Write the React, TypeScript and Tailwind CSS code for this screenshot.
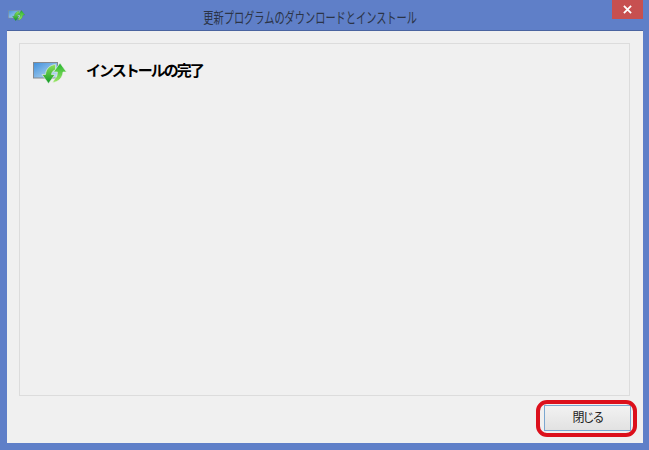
const UpdateIcon = ({ className, id, outline }: { className: string; id: string; outline: string }) => (
  <svg viewBox="0 0 34 22" className={className}>
    <defs>
      <linearGradient id={`${id}-screen`} x1="0" y1="0" x2="1" y2="1">
        <stop offset="0" stopColor="#3f8fdc" />
        <stop offset="1" stopColor="#c4e0f2" />
      </linearGradient>
      <linearGradient id={`${id}-left`} x1="0" y1="0" x2="0" y2="1">
        <stop offset="0" stopColor="#8ee05a" />
        <stop offset="1" stopColor="#0f9a25" />
      </linearGradient>
      <linearGradient id={`${id}-right`} x1="0" y1="0" x2="0" y2="1">
        <stop offset="0" stopColor="#25b530" />
        <stop offset="1" stopColor="#9ce666" />
      </linearGradient>
    </defs>
    <rect x="0.5" y="0.5" width="24" height="15.5" fill={`url(#${id}-screen)`} stroke="#85898e" />
    <g transform="translate(1.5 0)">
      <path d="M21 2.5 C15 3 11.5 7 11 12.5 L7.5 12.5 L14 21.5 L20.5 12.5 L17 12.5 C17.5 10 18.5 8.5 21 8 Z" fill={`url(#${id}-left)`} stroke={outline} strokeWidth="0.6" />
      <path d="M25.5 1 L32 10 L28.5 10 C28 16 24 20 18 20.5 L20.5 16.5 C22 15.5 23 13 23 10 L19 10 Z" fill={`url(#${id}-right)`} stroke={outline} strokeWidth="0.6" />
    </g>
  </svg>
);

export default function App() {
  return (
    <div className="relative w-[649px] h-[450px] overflow-hidden bg-[#5f7fc8] font-['Liberation_Sans','Noto_Sans_CJK_JP',sans-serif] flex flex-col">
      {/* title bar */}
      <div className="h-[30px] flex items-start pl-[8px] pr-[6px] shrink-0">
        <UpdateIcon id="small" outline="#2f8f3a" className="w-[17px] h-[11px] mt-[10px] shrink-0" />
        <div className="flex-1 text-center mt-[6px] pl-[4px] pr-[20px] whitespace-nowrap">
          <span className="inline-block text-[15px] leading-[20px] text-[#2b3447] scale-x-[0.68]">
            更新プログラムのダウンロードとインストール
          </span>
        </div>
        <div className="w-[31px] h-[19px] bg-[#c75050] flex items-center justify-center shrink-0">
          <svg viewBox="0 0 10 10" className="w-[9px] h-[9px]">
            <path d="M1 1 L9 9 M9 1 L1 9" stroke="#fff" strokeWidth="2" />
          </svg>
        </div>
      </div>

      {/* client area */}
      <div className="ml-[7px] mr-[6px] h-[413px] bg-[#f0f0f0] border-t border-[#4a64a0] flex flex-col pl-[12px] pr-[13px] pt-[12px]">
        <div className="h-[353px] border border-[#dcdcdc] flex items-start pl-[13px] pt-[16px]">
          <UpdateIcon id="large" outline="#f0f0f0" className="w-[34px] h-[22px] mt-[2px] shrink-0" />
          <div className="ml-[19px] text-[15px] leading-[22px] tracking-[-2px] font-bold text-black">インストールの完了</div>
        </div>
        <div className="flex justify-end mt-[9px] -mr-[1px]">
          <button className="w-[87px] h-[26px] border border-[#7aa7d0] bg-gradient-to-b from-[#f2f2f2] to-[#e2e2e2] text-[12px] tracking-[-2px] text-[#222]">
            閉じる
          </button>
        </div>
      </div>

      {/* red annotation round the button */}
      <div className="absolute left-[536px] top-[400px] w-[101px] h-[37px] rounded-[11px] border-[4px] border-[#dc101c]" />
    </div>
  );
}
